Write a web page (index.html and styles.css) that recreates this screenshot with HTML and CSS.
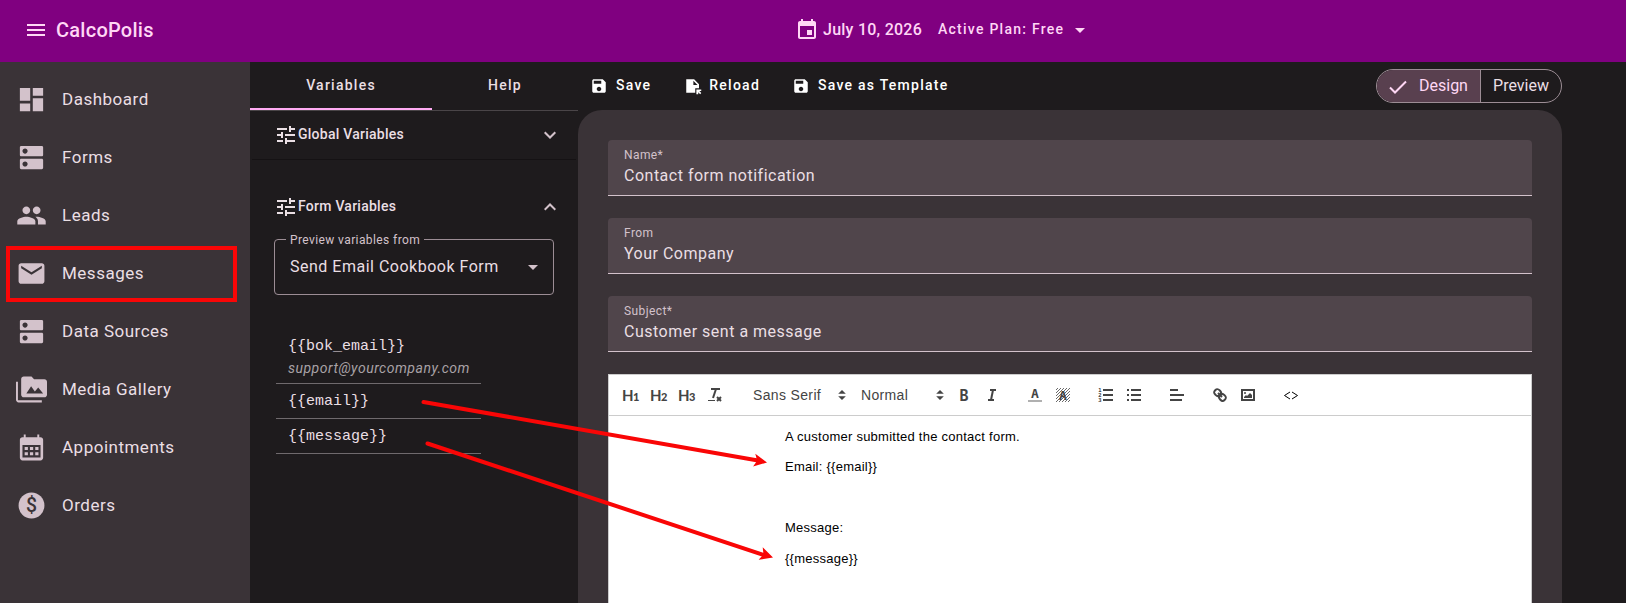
FILE: index.html
```html
<!DOCTYPE html>
<html lang="en">

<head>
    <meta charset="UTF-8">
    <meta name="viewport" content="width=device-width, initial-scale=1.0">
    <title>CalcoPolis - Messages</title>
    <link rel="stylesheet" href="styles.css">
</head>

<body>
    <header class="topbar">
        <svg class="menu-icon" viewBox="0 0 24 24"><path d="M3 18h18v-2H3v2zm0-5h18v-2H3v2zm0-7v2h18V6H3z"/></svg>
        <span class="brand">CalcoPolis</span>
        <div class="topbar-info">
            <svg class="date-icon" viewBox="0 0 24 24"><path d="M17 12h-5v5h5v-5zM16 1v2H8V1H6v2H5c-1.11 0-1.99.9-1.99 2L3 19c0 1.1.89 2 2 2h14c1.1 0 2-.9 2-2V5c0-1.1-.9-2-2-2h-1V1h-2zm3 18H5V8h14v11z"/></svg>
            <span class="date">July 10, 2026</span>
            <span class="plan">Active Plan: Free</span>
            <svg class="plan-caret" viewBox="0 0 10 5"><path d="M0 0h10L5 5z"/></svg>
        </div>
    </header>

    <div class="layout">
        <nav class="sidebar">
            <a class="nav-item">
                <svg viewBox="0 0 24 24"><path d="M3 13h8V3H3v10zm0 8h8v-6H3v6zm10 0h8V11h-8v10zm0-18v6h8V3h-8z"/></svg>
                <span>Dashboard</span>
            </a>
            <a class="nav-item">
                <svg viewBox="0 0 24 24"><path d="M20 13H4c-.55 0-1 .45-1 1v6c0 .55.45 1 1 1h16c.55 0 1-.45 1-1v-6c0-.55-.45-1-1-1zM7 19c-1.1 0-2-.9-2-2s.9-2 2-2 2 .9 2 2-.9 2-2 2zM20 3H4c-.55 0-1 .45-1 1v6c0 .55.45 1 1 1h16c.55 0 1-.45 1-1V4c0-.55-.45-1-1-1zM7 9c-1.1 0-2-.9-2-2s.9-2 2-2 2 .9 2 2-.9 2-2 2z"/></svg>
                <span>Forms</span>
            </a>
            <a class="nav-item">
                <svg viewBox="0 0 24 24"><path d="M16 11c1.66 0 2.99-1.34 2.99-3S17.66 5 16 5s-3 1.34-3 3 1.34 3 3 3zm-8 0c1.66 0 2.99-1.34 2.99-3S9.66 5 8 5 5 6.34 5 8s1.34 3 3 3zm0 2c-2.33 0-7 1.17-7 3.5V19h14v-2.500c0-2.330-4.670-3.500-7-3.500zm8 0c-.29 0-.62.02-.97.05 1.160.84 1.970 1.970 1.970 3.450V19h6v-2.500c0-2.330-4.670-3.500-7-3.500z"/></svg>
                <span>Leads</span>
            </a>
            <a class="nav-item active">
                <svg viewBox="0 0 24 24"><path d="M20 4H4c-1.100 0-1.990.9-1.990 2L2 18c0 1.100.9 2 2 2h16c1.100 0 2-.9 2-2V6c0-1.100-.9-2-2-2zm0 4l-8 5-8-5V6l8 5 8-5v2z"/></svg>
                <span>Messages</span>
            </a>
            <a class="nav-item">
                <svg viewBox="0 0 24 24"><path d="M20 13H4c-.55 0-1 .45-1 1v6c0 .55.45 1 1 1h16c.55 0 1-.45 1-1v-6c0-.55-.45-1-1-1zM7 19c-1.1 0-2-.9-2-2s.9-2 2-2 2 .9 2 2-.9 2-2 2zM20 3H4c-.55 0-1 .45-1 1v6c0 .55.45 1 1 1h16c.55 0 1-.45 1-1V4c0-.55-.45-1-1-1zM7 9c-1.1 0-2-.9-2-2s.9-2 2-2 2 .9 2 2-.9 2-2 2z"/></svg>
                <span>Data Sources</span>
            </a>
            <a class="nav-item">
                <svg viewBox="0 0 24 24"><path fill-rule="evenodd" d="M1.500 6H0v14c0 1.100.9 2 2 2h18v-1.600H1.500zM22 4h-8l-2-2H6c-1.100 0-2 .9-2 2v12c0 1.100.9 2 2 2h16c1.100 0 2-.9 2-2V6c0-1.100-.9-2-2-2zM8 15l3.700-5.500 2.900 4 2.600-3L21 15z"/></svg>
                <span>Media Gallery</span>
            </a>
            <a class="nav-item">
                <svg viewBox="0 0 24 24"><path fill-rule="evenodd" d="M19 4h-1V2h-1.500v2h-9V2H6v2H5c-1.110 0-2 .9-2 2v14c0 1.100.89 2 2 2h14c1.100 0 2-.9 2-2V6c0-1.100-.9-2-2-2zM5 10h14v9.700H5z"/><path d="M6.700 11.700h2.500V14H6.700zm4.100 0h2.500V14h-2.500zm4.100 0h2.500V14h-2.500zM6.700 15.700h2.500V18H6.700zm4.100 0h2.500V18h-2.500zm4.100 0h2.500V18h-2.500z"/></svg>
                <span>Appointments</span>
            </a>
            <a class="nav-item">
                <svg viewBox="0 0 24 24"><circle cx="12" cy="12" r="10"/><text class="dollar" x="12" y="17.300">$</text></svg>
                <span>Orders</span>
            </a>
        </nav>

        <aside class="panel">
            <div class="tabs">
                <div class="tab selected">Variables</div>
                <div class="tab">Help</div>
            </div>

            <section class="group group-global">
                <div class="group-head">
                    <svg class="tune" viewBox="0 0 24 24"><path d="M3 17v2h6v-2H3zM3 5v2h10V5H3zm10 16v-2h8v-2h-8v-2h-2v6h2zM7 9v2H3v2h4v2h2V9H7zm14 4v-2H11v2h10zm-6-4h2V7h4V5h-4V3h-2v6z"/></svg>
                    <span>Global Variables</span>
                    <svg class="chevron" viewBox="0 0 12 8"><path d="M.7 1.200L6 6.500l5.300-5.300"/></svg>
                </div>
            </section>

            <section class="group group-form">
                <div class="group-head">
                    <svg class="tune" viewBox="0 0 24 24"><path d="M3 17v2h6v-2H3zM3 5v2h10V5H3zm10 16v-2h8v-2h-8v-2h-2v6h2zM7 9v2H3v2h4v2h2V9H7zm14 4v-2H11v2h10zm-6-4h2V7h4V5h-4V3h-2v6z"/></svg>
                    <span>Form Variables</span>
                    <svg class="chevron" viewBox="0 0 12 8"><path d="M.7 6.800L6 1.500l5.300 5.300"/></svg>
                </div>
                <div class="select">
                    <span class="select-label">Preview variables from</span>
                    <span class="select-value">Send Email Cookbook Form</span>
                    <svg class="select-caret" viewBox="0 0 10 5"><path d="M0 0h10L5 5z"/></svg>
                </div>
                <ul class="vars">
                    <li><code>{{bok_email}}</code><em>support@yourcompany.com</em></li>
                    <li><code>{{email}}</code></li>
                    <li><code>{{message}}</code></li>
                </ul>
            </section>
        </aside>

        <main class="content">
            <div class="actions">
                <button class="action">
                    <svg viewBox="0 0 24 24"><path d="M17 3H5c-1.110 0-2 .9-2 2v14c0 1.100.89 2 2 2h14c1.100 0 2-.9 2-2V7l-4-4zm-5 16c-1.660 0-3-1.340-3-3s1.340-3 3-3 3 1.340 3 3-1.340 3-3 3zm3-10H5V5h10v4z"/></svg>
                    <span>Save</span>
                </button>
                <button class="action action-reload">
                    <svg viewBox="0 0 24 24"><path fill-rule="evenodd" d="M3 3h10.500L20 9.500V15h-5v6H3zM12.500 5v5.500H18zM16.500 16.500H23v2.300h-2.500L23 21.300 21.500 23 19 20.400V23h-2.500z"/></svg>
                    <span>Reload</span>
                </button>
                <button class="action">
                    <svg viewBox="0 0 24 24"><path d="M17 3H5c-1.110 0-2 .9-2 2v14c0 1.100.89 2 2 2h14c1.100 0 2-.9 2-2V7l-4-4zm-5 16c-1.660 0-3-1.340-3-3s1.340-3 3-3 3 1.340 3 3-1.340 3-3 3zm3-10H5V5h10v4z"/></svg>
                    <span>Save as Template</span>
                </button>
                <div class="toggle">
                    <div class="toggle-item on">
                        <svg viewBox="0 0 18 14"><path d="M1 7.500l5 5L17 1.500"/></svg>
                        <span>Design</span>
                    </div>
                    <div class="toggle-item">Preview</div>
                </div>
            </div>

            <div class="card">
                <div class="field">
                    <label>Name*</label>
                    <div>Contact form notification</div>
                </div>
                <div class="field">
                    <label>From</label>
                    <div>Your Company</div>
                </div>
                <div class="field">
                    <label>Subject*</label>
                    <div>Customer sent a message</div>
                </div>

                <div class="editor">
                    <div class="toolbar">
                        <div class="formats">
                            <span class="tool heading">H<small>1</small></span>
                            <span class="tool heading">H<small>2</small></span>
                            <span class="tool heading">H<small>3</small></span>
                            <span class="tool"><svg viewBox="0 0 18 18"><line x1="5" x2="14" y1="3" y2="3"/><line x1="7" x2="10" y1="12" y2="3"/><line x1="11" x2="15" y1="11" y2="15"/><line x1="15" x2="11" y1="11" y2="15"/><rect class="fill" height="1" width="7" x="2" y="14"/></svg></span>
                        </div>
                        <div class="formats">
                            <span class="picker picker-font">Sans Serif <svg viewBox="0 0 18 18"><polygon points="7 11 9 13 11 11 7 11"/><polygon points="7 7 9 5 11 7 7 7"/></svg></span>
                            <span class="picker picker-size">Normal <svg viewBox="0 0 18 18"><polygon points="7 11 9 13 11 11 7 11"/><polygon points="7 7 9 5 11 7 7 7"/></svg></span>
                            <span class="tool"><svg viewBox="0 0 18 18"><text class="glyph bold" x="9" y="15">B</text></svg></span>
                            <span class="tool"><svg viewBox="0 0 18 18"><line x1="7" x2="13" y1="4" y2="4"/><line x1="5" x2="11" y1="14" y2="14"/><line x1="8" x2="10" y1="14" y2="4"/></svg></span>
                        </div>
                        <div class="formats">
                            <span class="tool"><svg viewBox="0 0 18 18"><text class="glyph" x="9" y="12">A</text><rect class="label" x="2" y="14" width="14" height="2"/></svg></span>
                            <span class="tool"><svg viewBox="0 0 18 18">
                                <defs><pattern id="hatch" width="3" height="3" patternUnits="userSpaceOnUse"><path class="hatch" d="M-1 1L1-1M0 3L3 0M2 4L4 2"/></pattern></defs>
                                <rect class="hatched" x="2" y="2" width="14" height="14"/><text class="glyph" x="9" y="14">A</text></svg></span>
                        </div>
                        <div class="formats">
                            <span class="tool"><svg viewBox="0 0 18 18"><line x1="6" x2="16" y1="4" y2="4"/><line x1="6" x2="16" y1="9" y2="9"/><line x1="6" x2="16" y1="14" y2="14"/><text class="digit" x="3" y="6">1</text><text class="digit" x="3" y="11">2</text><text class="digit" x="3" y="16">3</text></svg></span>
                            <span class="tool"><svg viewBox="0 0 18 18"><line x1="6" x2="16" y1="4" y2="4"/><line x1="6" x2="16" y1="9" y2="9"/><line x1="6" x2="16" y1="14" y2="14"/><line x1="2" x2="4" y1="4" y2="4"/><line x1="2" x2="4" y1="9" y2="9"/><line x1="2" x2="4" y1="14" y2="14"/></svg></span>
                        </div>
                        <div class="formats">
                            <span class="tool"><svg viewBox="0 0 18 18"><line x1="2" x2="10" y1="4" y2="4"/><line x1="2" x2="16" y1="9" y2="9"/><line x1="2" x2="14" y1="14" y2="14"/></svg></span>
                        </div>
                        <div class="formats">
                            <span class="tool"><svg viewBox="0 0 18 18"><line x1="7" x2="11" y1="7" y2="11"/><path d="M8.900 4.577a3.476 3.476 0 0 1 .36 4.679A3.476 3.476 0 0 1 4.577 8.900C3.185 7.500 2.035 6.400 4.217 4.217S7.500 3.185 8.900 4.577Z"/><path d="M13.423 9.100a3.476 3.476 0 0 0-4.679-.36 3.476 3.476 0 0 0 .36 4.679c1.392 1.392 2.500 2.542 4.679.36S14.815 10.500 13.423 9.100Z"/></svg></span>
                            <span class="tool"><svg viewBox="0 0 18 18"><rect height="10" width="12" x="3" y="4"/><circle class="fill" cx="6" cy="7" r="1"/><polyline class="fill" points="5 12 5 11 7 9 8 10 11 7 13 9 13 12 5 12"/></svg></span>
                        </div>
                        <div class="formats">
                            <span class="tool"><svg class="code-icon" viewBox="0 0 18 18"><polyline points="8 6 2.500 9.500 8 13"/><polyline points="10 6 15.500 9.500 10 13"/></svg></span>
                        </div>
                    </div>
                    <div class="message">
                        <p>A customer submitted the contact form.</p>
                        <p>Email: {{email}}</p>
                        <p>&nbsp;</p>
                        <p>Message:</p>
                        <p>{{message}}</p>
                    </div>
                </div>
            </div>
        </main>
    </div>

    <!-- arrows from the variables to the places where they are used -->
    <svg class="arrows" viewBox="0 0 1626 603">
        <path d="M423.500 402L758 460.500"/>
        <path d="M427.500 443.500L764 555"/>
        <path class="head" transform="translate(767 462.400) rotate(10)" d="M0 0L-13-6.500-10 0-13 6.500z"/>
        <path class="head" transform="translate(773 557.600) rotate(18.300)" d="M0 0L-13-6.500-10 0-13 6.500z"/>
    </svg>
</body>

</html>
```
FILE: styles.css
```css
* {
    box-sizing: border-box;
}

body {
    margin: 0;
    height: 603px;
    overflow: hidden;
    font-family: Roboto, sans-serif;
    background-color: #1e1b1d;
    color: #eadfe4;
}

svg {
    display: block;
    flex: none;
    fill: currentColor;
}

.topbar {
    display: flex;
    align-items: center;
    height: 62px;
    padding: 0 0 4px 24px;
    background-color: #800080;
    color: #ffd7f5;
}

.menu-icon {
    width: 24px;
    height: 24px;
    margin-top: 2px;
}

.brand {
    width: 738px;
    padding: 2px 0 0 8px;
    font-size: 20px;
    font-weight: 500;
    letter-spacing: 0.25px;
}

.topbar-info {
    display: flex;
    align-items: center;
    margin-left: 1px;
}

.date-icon {
    width: 24px;
    height: 24px;
    margin: 2px 4px 0 8px;
}

.date {
    width: 115px;
    font-size: 16px;
    font-weight: 500;
    letter-spacing: 0.25px;
}

.plan {
    width: 137px;
    font-size: 14px;
    font-weight: 500;
    letter-spacing: 1.25px;
}

.plan-caret {
    width: 10px;
    height: 5px;
    margin-top: 3px;
}

.layout {
    display: flex;
    height: 541px;
}

/* Sidebar */
.sidebar {
    width: 250px;
    padding-top: 8px;
    background-color: #3a3337;
}

.nav-item {
    display: flex;
    align-items: center;
    gap: 15.500px;
    height: 58px;
    padding-left: 15.500px;
    font-size: 17px;
    letter-spacing: 0.5px;
    position: relative;
}

.nav-item svg {
    width: 31px;
    height: 31px;
    color: #d3c2cb;
}

.nav-item.active::after {
    content: "";
    position: absolute;
    box-sizing: border-box;
    left: 6px;
    top: 2px;
    width: 231px;
    height: 56px;
    border: 4px solid #f90606;
}

.dollar {
    font: 500 15px Roboto, sans-serif;
    letter-spacing: 0;
    text-anchor: middle;
    fill: #3a3337;
}

/* Variables panel */
.panel {
    width: 328px;
}

.tabs {
    display: flex;
    height: 49px;
    border-bottom: 1px solid #4a4548;
}

.tab {
    width: 146px;
    line-height: 46px;
    text-align: center;
    font-size: 14px;
    font-weight: 500;
    letter-spacing: 1.25px;
}

.tab.selected {
    width: 182px;
    border-bottom: 2px solid #ffabf3;
}

.group {
    padding: 0 24px;
}

.group-global {
    height: 49px;
    margin: 0 2px;
    padding: 0 22px;
    border-bottom: 1px solid #151214;
}

.group-form {
    padding-top: 23px;
}

.group-head {
    display: flex;
    align-items: center;
    height: 45px;
    font-size: 14px;
    font-weight: 500;
    letter-spacing: 0.25px;
}

.tune {
    width: 24px;
    height: 24px;
    margin-top: 2px;
}

.chevron {
    width: 12px;
    height: 8px;
    margin: 3px -2px 0 auto;
    fill: none;
    stroke: #d3c2cb;
    stroke-width: 2;
}

.select {
    display: flex;
    align-items: center;
    justify-content: space-between;
    position: relative;
    height: 56px;
    margin-top: 11px;
    padding: 0 15px;
    border: 1px solid #9c8d95;
    border-radius: 4px;
}

.select-label {
    position: absolute;
    left: 11px;
    top: -8px;
    padding: 0 4px;
    line-height: 16px;
    font-size: 12px;
    letter-spacing: 0.4px;
    background-color: #1e1b1d;
    color: #d3c2cb;
}

.select-value {
    padding-bottom: 2px;
    font-size: 16px;
    letter-spacing: 0.5px;
}

.select-caret {
    width: 10px;
    height: 5px;
    color: #d3c2cb;
}

.vars {
    width: 205px;
    margin: 37px 0 0 2px;
    padding: 0;
    list-style: none;
}

.vars li {
    display: flex;
    flex-direction: column;
    justify-content: center;
    height: 35px;
    padding-left: 12px;
    border-bottom: 1px solid #6f6a6d;
}

.vars li:first-child {
    height: 52px;
}

.vars code {
    line-height: 23px;
    font-family: "Liberation Mono", monospace;
    font-size: 15px;
}

.vars em {
    line-height: 21px;
    padding-bottom: 1px;
    font-size: 14px;
    letter-spacing: 0.5px;
    color: #a9a2a6;
}

/* Message form */
.content {
    width: 984px;
}

.actions {
    display: flex;
    align-items: center;
    height: 48px;
    padding-left: 12px;
    color: #fff;
}

.action {
    display: flex;
    align-items: center;
    gap: 8px;
    margin-right: 33px;
    padding: 0 0 2px;
    border: 0;
    background: none;
    color: #fff;
    font: 500 14px Roboto, sans-serif;
    letter-spacing: 1.25px;
}

.action svg {
    width: 18px;
    height: 18px;
    margin-top: 2px;
}

.action-reload {
    margin-right: 32px;
}

.action-reload svg {
    margin-right: -1px;
}

.toggle {
    display: flex;
    width: 186px;
    height: 34px;
    margin: -1px 0 0 auto;
    overflow: hidden;
    border: 1px solid #9c8d95;
    border-radius: 17px;
    font-size: 16px;
    color: #eadfe4;
}

.toggle-item {
    flex: 1;
    line-height: 31px;
    text-align: center;
}

.toggle-item.on {
    display: flex;
    flex: none;
    width: 104px;
    gap: 12px;
    padding-left: 12px;
    border-right: 1px solid #9c8d95;
    background-color: #59404f;
    color: #ffd7f5;
}

.toggle svg {
    width: 18px;
    height: 14px;
    margin-top: 10px;
    fill: none;
    stroke: currentColor;
    stroke-width: 2;
}

.card {
    height: 493px;
    padding: 30px 30px 0;
    border-radius: 24px 24px 0 0;
    background-color: #3a3337;
}

.field {
    height: 56px;
    margin-bottom: 22px;
    padding: 7px 16px 0;
    border-bottom: 1px solid #d3c2cb;
    border-radius: 4px 4px 0 0;
    background-color: #50454b;
    font-size: 16px;
    line-height: 24px;
    letter-spacing: 0.5px;
}

.field label {
    display: block;
    height: 17px;
    line-height: 16px;
    font-size: 12px;
    letter-spacing: 0.4px;
    color: #d3c2cb;
}

.editor {
    height: 240px;
    border: 1px solid #ccc;
    background-color: #fff;
    color: #000;
    font-family: "Liberation Sans", Arial, sans-serif;
}

.toolbar {
    display: flex;
    height: 41px;
    padding: 8px;
    border-bottom: 1px solid #ccc;
    color: #444;
}

.formats {
    display: flex;
    margin-right: 15px;
}

.tool {
    width: 28px;
    height: 24px;
    padding: 3px 5px;
}

.tool svg,
.picker svg {
    width: 18px;
    height: 18px;
    fill: none;
    stroke: #444;
    stroke-width: 2;
    stroke-linecap: butt;
}

.tool .fill {
    fill: #444;
    stroke: none;
}

.tool .label {
    fill: #b0b0b0;
    stroke: none;
}

.tool .hatched {
    fill: url(#hatch);
    stroke: none;
}

.tool .hatch {
    stroke: #444;
    stroke-width: 0.8;
}

.heading {
    font: 700 15px/19px Lato, sans-serif;
    letter-spacing: -0.5px;
    white-space: nowrap;
}

.heading small {
    font-size: 11px;
    font-weight: 900;
}

.glyph,
.digit {
    font: 700 13px "DejaVu Sans Mono", monospace;
    text-anchor: middle;
    fill: #444;
    stroke: none;
}

.glyph.bold {
    font-size: 15px;
}

.digit {
    font-size: 5.500px;
}

.picker {
    display: flex;
    justify-content: space-between;
    align-items: center;
    height: 24px;
    padding-left: 9px;
    font-size: 14px;
    letter-spacing: 0.35px;
}

.picker svg {
    margin-right: 1px;
    fill: #444;
    stroke-width: 1.500;
}

.picker-font {
    width: 108px;
}

.picker-size {
    width: 98px;
}

.tool .code-icon {
    stroke: #000;
    stroke-width: 1;
}

.message {
    width: 570px;
    margin: 0 auto;
    padding-top: 11.500px;
    font-size: 13px;
    letter-spacing: 0.25px;
}

.message p {
    margin: 0 0 12px;
    line-height: 18.500px;
}

.arrows {
    position: absolute;
    left: 0;
    top: 0;
    width: 1626px;
    height: 603px;
    pointer-events: none;
    fill: #f90606;
    stroke: #f90606;
    stroke-width: 4;
    stroke-linecap: round;
}

.arrows .head {
    stroke: none;
}
```
